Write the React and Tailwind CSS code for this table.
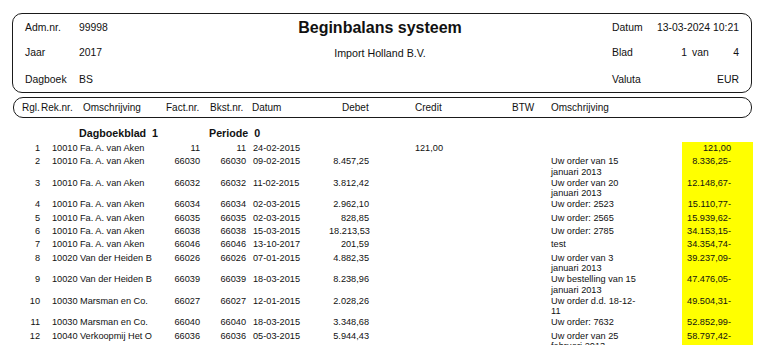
const ROWS = [
  { n: 1, rek: '10010', name: 'Fa. A. van Aken', fact: '11', bkst: '11', date: '24-02-2015', debet: '', credit: '121,00', desc: [], saldo: '121,00' },
  { n: 2, rek: '10010', name: 'Fa. A. van Aken', fact: '66030', bkst: '66030', date: '09-02-2015', debet: '8.457,25', credit: '', desc: ['Uw order van 15', 'januari 2013'], saldo: '8.336,25-' },
  { n: 3, rek: '10010', name: 'Fa. A. van Aken', fact: '66032', bkst: '66032', date: '11-02-2015', debet: '3.812,42', credit: '', desc: ['Uw order van 20', 'januari 2013'], saldo: '12.148,67-' },
  { n: 4, rek: '10010', name: 'Fa. A. van Aken', fact: '66034', bkst: '66034', date: '02-03-2015', debet: '2.962,10', credit: '', desc: ['Uw order: 2523'], saldo: '15.110,77-' },
  { n: 5, rek: '10010', name: 'Fa. A. van Aken', fact: '66035', bkst: '66035', date: '02-03-2015', debet: '828,85', credit: '', desc: ['Uw order: 2565'], saldo: '15.939,62-' },
  { n: 6, rek: '10010', name: 'Fa. A. van Aken', fact: '66038', bkst: '66038', date: '15-03-2015', debet: '18.213,53', credit: '', desc: ['Uw order: 2785'], saldo: '34.153,15-' },
  { n: 7, rek: '10010', name: 'Fa. A. van Aken', fact: '66046', bkst: '66046', date: '13-10-2017', debet: '201,59', credit: '', desc: ['test'], saldo: '34.354,74-' },
  { n: 8, rek: '10020', name: 'Van der Heiden B', fact: '66026', bkst: '66026', date: '07-01-2015', debet: '4.882,35', credit: '', desc: ['Uw order van 3', 'januari 2013'], saldo: '39.237,09-' },
  { n: 9, rek: '10020', name: 'Van der Heiden B', fact: '66039', bkst: '66039', date: '18-03-2015', debet: '8.238,96', credit: '', desc: ['Uw bestelling van 15', 'januari 2013'], saldo: '47.476,05-' },
  { n: 10, rek: '10030', name: 'Marsman en Co.', fact: '66027', bkst: '66027', date: '12-01-2015', debet: '2.028,26', credit: '', desc: ['Uw order d.d. 18-12-', '11'], saldo: '49.504,31-' },
  { n: 11, rek: '10030', name: 'Marsman en Co.', fact: '66040', bkst: '66040', date: '18-03-2015', debet: '3.348,68', credit: '', desc: ['Uw order: 7632'], saldo: '52.852,99-' },
  { n: 12, rek: '10040', name: 'Verkoopmij Het O', fact: '66036', bkst: '66036', date: '05-03-2015', debet: '5.944,43', credit: '', desc: ['Uw order van 25', 'februari 2013'], saldo: '58.797,42-' },
];

function HeadRow({ label, value, children, className }) {
  return (
    <div className={`flex h-[16px] items-center leading-[16px] ${className}`}>
      <div className="flex w-[123px] shrink-0">
        <span className="w-[54px] shrink-0">{label}</span>
        <span>{value}</span>
      </div>
      {children}
    </div>
  );
}

export default function App() {
  return (
    <div className="relative h-[345px] w-[768px] overflow-hidden bg-white text-[#111] font-['Liberation_Sans',Arial,sans-serif]">
      {/* Kop */}
      <div className="ml-[12px] mt-[13px] h-[80px] w-[740px] rounded-[10px] border border-[#1a1a1a] px-[12px] text-[10.4px]">
        <HeadRow label="Adm.nr." value="99998" className="mt-[6px]">
          <div className="flex-1 text-center text-[16px] font-bold">Beginbalans systeem</div>
          <div className="flex w-[127px] shrink-0">
            <span className="w-[44px]">Datum</span>
            <span className="flex-1 text-right">13-03-2024 10:21</span>
          </div>
        </HeadRow>
        <HeadRow label="Jaar" value="2017" className="mt-[9px]">
          <div className="flex-1 text-center text-[10.7px]">Import Holland B.V.</div>
          <div className="flex w-[127px] shrink-0">
            <span className="w-[60px]">Blad</span>
            <span className="w-[15px] text-right">1</span>
            <span className="ml-[5px]">van</span>
            <span className="flex-1 text-right">4</span>
          </div>
        </HeadRow>
        <HeadRow label="Dagboek" value="BS" className="mt-[11px]">
          <div className="flex-1" />
          <div className="flex w-[127px] shrink-0">
            <span>Valuta</span>
            <span className="flex-1 text-right">EUR</span>
          </div>
        </HeadRow>
      </div>

      {/* Kolomkoppen */}
      <div className="ml-[13px] mt-[4px] flex h-[21px] w-[739px] items-center rounded-[10px] border border-[#1a1a1a] pl-[8px] text-[10px] leading-[12px]">
        <span className="w-[19px] shrink-0">Rgl.</span>
        <span className="w-[42px] shrink-0">Rek.nr.</span>
        <span className="w-[83px] shrink-0">Omschrijving</span>
        <span className="w-[44px] shrink-0">Fact.nr.</span>
        <span className="w-[42px] shrink-0">Bkst.nr.</span>
        <span className="w-[90px] shrink-0">Datum</span>
        <span className="w-[73px] shrink-0">Debet</span>
        <span className="w-[97px] shrink-0">Credit</span>
        <span className="w-[39px] shrink-0">BTW</span>
        <span>Omschrijving</span>
      </div>

      {/* Dagboekblad */}
      <div className="mt-[9px] flex h-[12px] items-center text-[10.7px] font-bold leading-[12px]">
        <span className="ml-[79px] w-[130px]">Dagboekblad&nbsp; 1</span>
        <span>Periode&nbsp; 0</span>
      </div>

      <div className="mt-[3px] text-[9.2px] leading-[10.3px]">
        {ROWS.map((r) => (
          <div key={r.n} className="flex min-h-[13.3px] whitespace-nowrap">
            <span className="w-[40px] shrink-0 pt-[1px] text-right">{r.n}</span>
            <span className="ml-[12px] w-[28px] shrink-0 pt-[1px]">{r.rek}</span>
            <span className="w-[80px] shrink-0 pt-[1px]">{r.name}</span>
            <span className="w-[40px] shrink-0 pt-[1px] text-right">{r.fact}</span>
            <span className="w-[46px] shrink-0 pt-[1px] text-right">{r.bkst}</span>
            <span className="ml-[7px] w-[76px] shrink-0 pt-[1px]">{r.date}</span>
            <span className="w-[40px] shrink-0 pt-[1px] text-right">{r.debet}</span>
            <span className="w-[74px] shrink-0 pt-[1px] text-right">{r.credit}</span>
            <div className="ml-[108px] w-[90px] shrink-0 pt-[1px]">
              {r.desc.map((line) => (
                <div key={line}>{line}</div>
              ))}
            </div>
            <span className="ml-[41px] w-[71px] shrink-0 bg-[#ffff00] pr-[22px] pt-[1px] text-right">{r.saldo}</span>
          </div>
        ))}
      </div>
    </div>
  );
}
